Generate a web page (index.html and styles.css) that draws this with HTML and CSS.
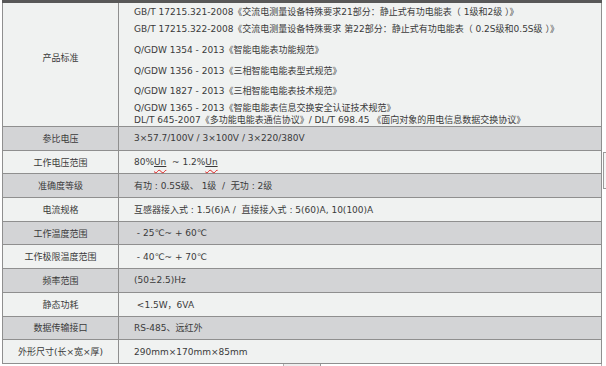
FILE: index.html
```html
<!DOCTYPE html>
<html lang="zh-CN">
<head>
    <meta charset="UTF-8">
    <meta name="viewport" content="width=device-width, initial-scale=1.0">
    <title>技术参数</title>
    <link rel="stylesheet" href="styles.css">
</head>
<body>

    <div class="spec-wrap">
        <div class="top-bar"></div>
        <table class="spec-table">
            <tr class="row-std">
                <td class="label label-std">产品标准</td>
                <td class="value std-list">
                    <p class="s1">GB/T 17215.321-2008《交流电测量设备特殊要求21部分：静止式有功电能表（ 1级和2级 ）》</p>
                    <p class="s2">GB/T 17215.322-2008《交流电测量设备特殊要求 第22部分：静止式有功电能表（ 0.2S级和0.5S级 ）》</p>
                    <p class="s3">Q/GDW 1354 - 2013《智能电能表功能规范》</p>
                    <p class="s3">Q/GDW 1356 - 2013《三相智能电能表型式规范》</p>
                    <p class="s4">Q/GDW 1827 - 2013《三相智能电能表技术规范》</p>
                    <p class="s5">Q/GDW 1365 - 2013《智能电能表信息交换安全认证技术规范》</p>
                    <p class="s6">DL/T 645-2007《多功能电能表通信协议》/ DL/T 698.45 《面向对象的用电信息数据交换协议》</p>
                </td>
            </tr>
            <tr class="dark">
                <td class="label">参比电压</td>
                <td class="value">3×57.7/100V / 3×100V / 3×220/380V</td>
            </tr>
            <tr>
                <td class="label">工作电压范围</td>
                <td class="value">80%<span class="spell"><span class="ul">Un</span></span> &nbsp;~ 1.2%<span class="spell"><span class="ul">Un</span></span></td>
            </tr>
            <tr class="dark">
                <td class="label">准确度等级</td>
                <td class="value">有功 : 0.5S级、 1级 &nbsp;/ &nbsp;无功 : 2级</td>
            </tr>
            <tr>
                <td class="label">电流规格</td>
                <td class="value">互感器接入式 : 1.5(6)A / &nbsp;直接接入式 : 5(60)A, 10(100)A</td>
            </tr>
            <tr class="dark">
                <td class="label">工作温度范围</td>
                <td class="value">&nbsp;- 25℃~ + 60℃</td>
            </tr>
            <tr>
                <td class="label">工作极限温度范围</td>
                <td class="value">&nbsp;- 40℃~ + 70℃</td>
            </tr>
            <tr class="dark">
                <td class="label">频率范围</td>
                <td class="value">(50±2.5)Hz</td>
            </tr>
            <tr>
                <td class="label">静态功耗</td>
                <td class="value">&nbsp;&lt;1.5W，6VA</td>
            </tr>
            <tr class="dark">
                <td class="label">数据传输接口</td>
                <td class="value">RS-485、远红外</td>
            </tr>
            <tr>
                <td class="label">外形尺寸(长×宽×厚)</td>
                <td class="value">290mm×170mm×85mm</td>
            </tr>
        </table>
        <div class="foot">
            <div class="foot-tab"></div>
            <div class="foot-box"></div>
        </div>
        <div class="side-tab"></div>
    </div>

</body>
</html>
```

FILE: styles.css
```css
body {
    margin: 0;
    background: #fff;
    font-family: "DejaVu Sans", "Noto Sans CJK SC", sans-serif;
    font-size: 9px;
    color: #3a3a3a;
}
.spec-wrap {
    position: relative;
    width: 600px;
    margin-left: 2px;
}
.top-bar {
    height: 3px;
    background: #585858;
}
.spec-table {
    width: 600px;
    border-collapse: collapse;
    table-layout: fixed;
}
.spec-table td {
    border: 1px solid #8f8f8f;
    height: 22.7px;
    padding: 0;
    background: #f0f2f1;
    white-space: nowrap;
}
.spec-table tr.dark td {
    background: #d3d4d6;
}
.spec-table tr:first-child td {
    border-top: none;
}
.label {
    width: 115px;
    text-align: center;
}
.spec-table .label-std {
    padding-bottom: 14px;
}
.value {
    padding-left: 15px !important;
}
.std-list {
    height: 120px !important;
    vertical-align: top;
}
.std-list p {
    margin: 0;
    line-height: 12px;
}
.std-list .s1 { margin-top: 3px; }
.std-list .s2 { margin-top: 5px; }
.std-list .s3 { margin-top: 9px; }
.std-list .s4 { margin-top: 8px; }
.std-list .s5 { margin-top: 5px; }
.std-list .s6 { margin-top: 0; }

/* spell-check squiggle under "Un" */
.spell {
    text-decoration: underline wavy #e02020;
    text-underline-offset: 4px;
    text-decoration-thickness: 1px;
}
.ul {
    text-decoration: underline;
    text-underline-offset: 1px;
}

.foot {
    display: flex;
    height: 5px;
}
.foot-tab {
    margin-left: 281px;
    width: 36px;
    background: #eeeeee;
    border-left: 1px solid #b0b0b0;
}
.foot-box {
    flex: 1;
    border-left: 1px solid #9a9a9a;
    border-right: 1px solid #b0b0b0;
}
.side-tab {
    position: absolute;
    left: 601px;
    top: 152px;
    width: 6px;
    height: 35px;
    background: #f6f6f6;
    border: 1px solid #9a9a9a;
    border-right: none;
}
```
